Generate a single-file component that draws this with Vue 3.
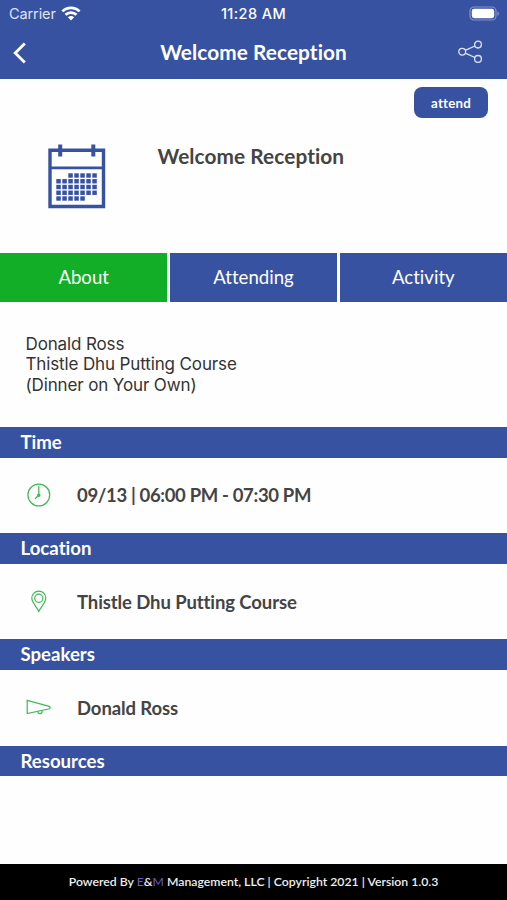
<script setup>
import { ref } from 'vue'

const tabs = ['About', 'Attending', 'Activity']
const activeTab = ref('About')

const description = ['Donald Ross', 'Thistle Dhu Putting Course', '(Dinner on Your Own)']

const sections = [
    { title: 'Time', icon: 'time', text: '09/13 | 06:00 PM - 07:30 PM' },
    { title: 'Location', icon: 'pin', text: 'Thistle Dhu Putting Course' },
    { title: 'Speakers', icon: 'horn', text: 'Donald Ross' },
    { title: 'Resources' }
]

// days drawn in each row of the calendar icon: [first column, last column]
const weeks = [[2, 6], [0, 6], [0, 6], [0, 6], [0, 4]]
const days = weeks.flatMap(([from, to], row) => {
    const list = []
    for (let col = from; col <= to; col++) {
        list.push({ x: 8.3 + col * 6, y: 30.3 + row * 5.75 })
    }
    return list
})
</script>

<template>
  <div class="screen">
    <header class="header">
      <div class="status">
        <div class="carrier">
          <span>Carrier</span>
          <svg width="20" height="15" viewBox="0 0 20 15">
            <g fill="none" stroke="#fff" stroke-width="2.7">
              <path d="M1.4 5.4a12.2 12.2 0 0 1 17.2 0" />
              <path d="M4.5 8.8a7.8 7.8 0 0 1 11 0" />
            </g>
            <path d="M6.9 11.2a4.4 4.4 0 0 1 6.2 0L10 14.4z" fill="#fff" />
          </svg>
        </div>
        <span class="clock">11:28 AM</span>
        <svg class="battery" width="31" height="15" viewBox="0 0 31 15">
          <rect x="1" y="1" width="26" height="13" rx="4" fill="none" stroke="#8492c6" stroke-width="1.2" />
          <rect x="2.8" y="2.8" width="22.4" height="9.4" rx="2.4" fill="#fff" />
          <path d="M28.4 5.2c2 .8 2 3.8 0 4.6z" fill="#8492c6" />
        </svg>
      </div>
      <div class="nav">
        <svg class="back" width="14" height="22" viewBox="0 0 14 22">
          <path d="M11.8 1.6L2.2 11l9.6 9.4" fill="none" stroke="#fff" stroke-width="2.8" />
        </svg>
        <h1>Welcome Reception</h1>
        <svg class="share" width="25" height="24" viewBox="0 0 25 24">
          <g fill="none" stroke="#dfe4f5" stroke-width="1.3">
            <circle cx="4.2" cy="11.7" r="3.4" />
            <circle cx="20" cy="4.6" r="3.4" />
            <circle cx="20" cy="18.9" r="3.4" />
            <path d="M7.3 10.3l9.6-4.3M7.3 13.1l9.6 4.4" />
          </g>
        </svg>
      </div>
    </header>

    <section class="hero">
      <button class="attend">attend</button>
      <div class="event">
        <svg width="58" height="66" viewBox="0 0 58 66">
          <g fill="none" stroke="#3852a2">
            <path d="M2 7.3h53.5v56.2H2z" stroke-width="3.4" />
            <path d="M2 24.8h53.5" stroke-width="2.8" />
            <path d="M12.2 1.5v12M45.3 1.5v12" stroke-width="4" />
          </g>
          <rect v-for="day in days" :key="`${day.x}-${day.y}`" :x="day.x" :y="day.y" width="4.5" height="4.4" fill="#3852a2" />
        </svg>
        <h2>Welcome Reception</h2>
      </div>
    </section>

    <nav class="tabs">
      <button
        v-for="tab in tabs"
        :key="tab"
        class="tab"
        :class="{ active: tab === activeTab }"
        @click="activeTab = tab"
      >
        {{ tab }}
      </button>
    </nav>

    <div class="description">
      <p v-for="line in description" :key="line">{{ line }}</p>
    </div>

    <section v-for="section in sections" :key="section.title" class="section">
      <h3>{{ section.title }}</h3>
      <div v-if="section.text" class="row">
        <svg class="icon" width="26" height="26" viewBox="0 0 26 26">
          <g v-if="section.icon === 'time'">
            <circle cx="12.8" cy="13" r="10.9" />
            <path d="M12.8 4v9.2l-3.8 3.6" />
            <circle cx="12.8" cy="13.2" r="1.1" class="dot" />
          </g>
          <g v-else-if="section.icon === 'pin'">
            <path d="M12.8 23.4c-2-4.3-7-8.7-7-13.3a7 7 0 0 1 14 0c0 4.6-5 9-7 13.3z" />
            <circle cx="12.8" cy="10.2" r="4.1" />
          </g>
          <g v-else>
            <path d="M1.2 6.4L22.4 12.2c2.4.7 2.4 2.3 0 2.8L1.2 19.6z" />
            <path d="M11.8 17.6c.3 3.2 4.5 2.7 4.4-.8" />
          </g>
        </svg>
        <span :class="section.icon">{{ section.text }}</span>
      </div>
    </section>

    <footer class="footer">
      <span>Powered By <b>E</b>&amp;<b>M</b> Management, LLC | Copyright 2021 | Version 1.0.3</span>
    </footer>
  </div>
</template>

<style>
body {
    margin: 0;
}
</style>

<style scoped>
.screen {
    display: flex;
    flex-direction: column;
    width: 507px;
    height: 900px;
    overflow: hidden;
    background: #fefefe;
    font-family: Lato, sans-serif;
    font-variant-ligatures: none;
    color: #444;
}

h1, h2, h3, p {
    margin: 0;
}

button {
    border: 0;
    padding: 0;
    font-family: inherit;
    font-variant-ligatures: none;
    color: #fff;
    background: #3852a2;
}

.header {
    height: 78.5px;
    flex: none;
    background: #3852a2;
    color: #fff;
}

.status {
    display: grid;
    grid-template-columns: 1fr auto 1fr;
    align-items: center;
    height: 27px;
    padding: 0 7px 0 9px;
    font-family: Inter, sans-serif;
    font-size: 14.5px;
}

.carrier {
    display: flex;
    align-items: center;
    gap: 5px;
    color: #dfe4f5;
}

.carrier span {
    letter-spacing: -0.1px;
}

.clock {
    font-weight: 500;
    letter-spacing: 0.4px;
    margin-right: 2px;
}

.battery {
    justify-self: end;
}

.nav {
    display: grid;
    grid-template-columns: 1fr auto 1fr;
    align-items: center;
    height: 50px;
    padding: 0 24px 0 13px;
}

.back {
    margin-top: 2px;
}

.nav h1 {
    margin-left: 11px;
    font-size: 20.8px;
    font-weight: 700;
    letter-spacing: 0.08px;
    line-height: 26px;
}

.share {
    justify-self: end;
}

.hero {
    flex: none;
    height: 174px;
}

.attend {
    display: block;
    width: 74px;
    height: 31px;
    margin: 8.5px 19px 0 auto;
    border-radius: 8px;
    font-size: 13.3px;
    font-weight: 700;
    letter-spacing: 0.2px;
}

.event {
    display: flex;
    align-items: flex-start;
    gap: 51.5px;
    padding: 25px 0 0 48px;
}

.event h2 {
    font-size: 20.8px;
    font-weight: 700;
    letter-spacing: 0.08px;
    line-height: 26px;
}

.tabs {
    display: grid;
    grid-template-columns: repeat(3, 1fr);
    gap: 2.5px;
    flex: none;
    height: 49px;
}

.tab {
    font-size: 18.6px;
}

.tab.active {
    background: #13ae27;
}

.description {
    flex: none;
    height: 93.5px;
    padding: 32px 25.5px 0;
    font-family: Inter, sans-serif;
    font-size: 17px;
    letter-spacing: -0.13px;
    line-height: 20.7px;
    color: #333;
}

.section {
    flex: none;
}

.section h3 {
    height: 30.5px;
    padding-left: 20.5px;
    background: #3852a2;
    color: #fff;
    font-size: 18.6px;
    font-weight: 700;
    line-height: 30.5px;
}

.row {
    display: flex;
    align-items: center;
    gap: 25px;
    height: 75.7px;
    padding-left: 26px;
    font-size: 18.5px;
    font-weight: 700;
    letter-spacing: -0.1px;
}

.row .time {
    letter-spacing: -0.35px;
}

.icon {
    margin-top: -1px;
    fill: none;
    stroke: #3cba54;
    stroke-width: 1.2;
}

.icon .dot {
    fill: #3cba54;
}

.footer {
    display: flex;
    align-items: center;
    justify-content: center;
    flex: none;
    height: 36.5px;
    margin-top: auto;
    background: #000;
    color: #eee;
    font-size: 12.25px;
    font-weight: 600;
}

.footer b {
    font-weight: 400;
    color: #6a5ac4;
}
</style>
